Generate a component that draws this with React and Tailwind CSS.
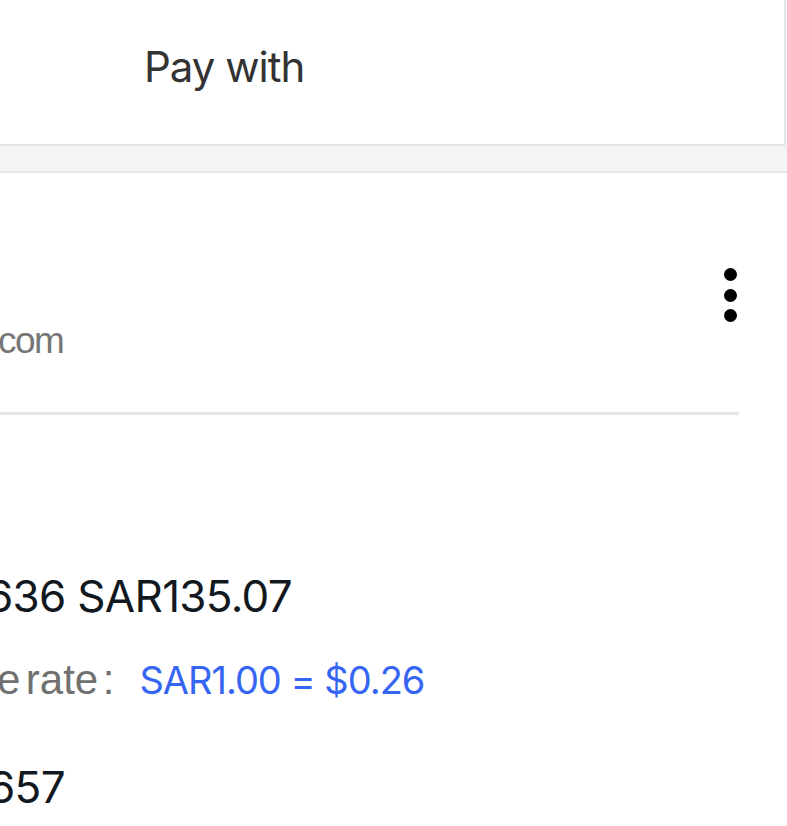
import React from 'react';

const Kebab = () => (
  <div className="flex flex-col gap-[7.5px]">
    <span className="block w-[13px] h-[13px] rounded-full bg-black" />
    <span className="block w-[13px] h-[13px] rounded-full bg-black" />
    <span className="block w-[13px] h-[13px] rounded-full bg-black" />
  </div>
);

const App = () => {
  return (
    <div className="w-[787px] h-[826px] overflow-hidden bg-white font-['Inter',sans-serif]">
      {/* Pay with header card */}
      <div className="w-[786px] h-[146px] border-r-2 border-b-2 border-[#e5e5e5] pt-[46px] pl-[144px]">
        <h2 className="text-[42px] leading-none tracking-[-1px] text-[#333333]">Pay with</h2>
      </div>
      <div className="h-[27px] bg-[#f4f4f4] border-b-2 border-[#e5e5e5]" />

      {/* Account row */}
      <div className="flex items-start justify-between pt-[95px] pr-[50px]">
        <p className="mt-[54px] -ml-[2px] text-[37px] leading-none tracking-[-1.5px] text-[#767676] font-['Liberation_Sans',sans-serif]">com</p>
        <Kebab />
      </div>
      <div className="mt-[53px] w-[739px] h-[3px] bg-[#e5e5e5]" />

      {/* Amount details */}
      <div className="mt-[159px] -ml-[14px] text-[44px] leading-none tracking-[-0.7px] text-[#111820] whitespace-nowrap">
        636 SAR135.07
      </div>
      <div className="mt-[41px] flex items-baseline -ml-[3px] leading-none whitespace-nowrap">
        <span className="flex items-baseline text-[42px] text-[#707070] font-['Liberation_Sans',sans-serif]">
          <span>e</span>
          <span className="ml-[5.5px]">rate</span>
          <span className="ml-[4.5px]">:</span>
        </span>
        <span className="ml-[25px] text-[38px] tracking-[-1px] text-[#3665f3]">SAR1.00 = $0.26</span>
      </div>
      <div className="mt-[64px] -ml-[12px] text-[44px] leading-none tracking-[-0.7px] text-[#111820]">657</div>
    </div>
  );
};

export default App;
